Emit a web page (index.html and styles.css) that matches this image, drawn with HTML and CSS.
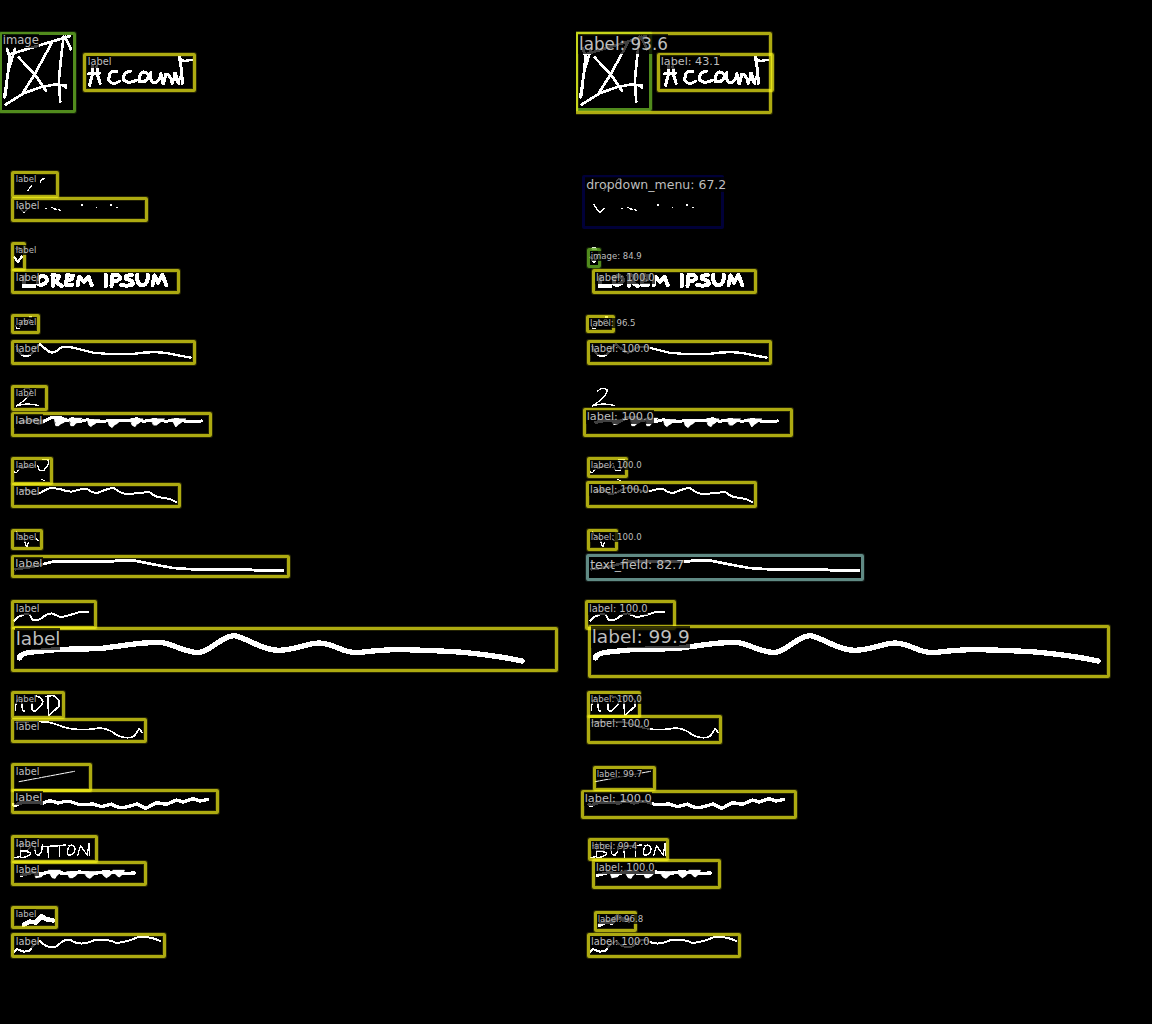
FILE: index.html
```html
<!DOCTYPE html>
<html lang="en">
<head>
<meta charset="utf-8">
<title>Sketch element detection</title>
<link rel="stylesheet" href="styles.css">
</head>
<body>
<main class="panels">
<section class="panel">
<svg class="ink" viewBox="0 0 576 1024">
<g id="sketch">
<g transform="translate(.2 20) scale(.33333)">
<path stroke-width="8" d="M32 102L210 48M195 50L212 88M190 50L182 120L176 180L180 245M45 85L25 150L12 232M20 85L28 110L16 225M55 112L105 165L137 212M155 68L105 160L66 222M16 254L70 220L120 202L165 193L198 197L196 203"/>
<path stroke-width="9" d="M276 138L276 165L268 196M290 138L292 165L300 190M264 162L298 160M350 154Q325 150 326 180Q335 198 358 184M391 154Q368 155 370 180Q385 194 410 180M430 155Q412 165 418 185Q438 190 445 168Q440 152 430 158M452 158Q448 190 465 188Q482 180 482 160L488 190M490 190L497 162Q512 165 516 190L526 160L536 190M538 112Q545 150 547 190M522 160L532 186L545 165"/>
<path stroke-width="7" d="M536 112L550 123L574 120"/>
</g>
<g transform="translate(-.2 160) scale(.33333)">
<path stroke-width="4" d="M122 66L126 58L133 56M84 92L90 84L95 78M54 133L64 148L72 158L86 145M138 145h1M156 142h3M162 146l8 2M176 149l7 2M246 135h1M290 142h1M333 135h1M351 142h1"/>
<path stroke-width="7" d="M44 292L54 306L66 290M50 266L60 266"/>
<path stroke-width="12" d="M74 350L72 378L104 378M125 347Q110 355 116 373Q135 378 142 360Q140 347 125 347M160 378L158 345L178 348L172 362L162 362L186 378M202 345L198 375L218 374M200 360L216 358M202 346L220 347M234 376L238 350L252 366L266 350L276 376M318 345L318 378M335 378L338 345Q362 342 360 356Q350 366 338 364M396 345Q375 345 378 356Q402 362 398 374Q380 380 364 374M412 344Q410 378 430 376Q446 370 444 344M458 376L464 346L474 368L488 345L500 376"/>
</g>
<g transform="translate(-.2 305) scale(.33333)">
<path stroke-width="4" d="M48 62L52 70L58 70M88 36L96 36M60 65Q70 35 80 55Q90 30 100 60M66 258Q80 243 94 255Q96 272 50 303Q77 292 115 301"/>
<path stroke-width="7" d="M50 125Q60 155 82 153Q100 148 108 128L120 118L145 138Q160 150 180 130Q190 121 220 128L280 143Q340 150 400 147Q450 138 500 144L572 158"/>
<path stroke-width="9" d="M60 352L80 348L100 345L130 350L155 338L180 336L200 348L218 341L240 350L262 344L290 350L335 347L390 346L410 341L430 349L465 344L500 349L530 344L560 349L606 348"/>
<path class="blob" d="M108 345h30l-8 10l-16 4l-4-6zM165 340h36l-8 12l-10 4l-6 6h-8zM210 340h36l-10 12l-8 2l-6 8h-8zM264 344h36l-14 12l-8 4l-4 5l-6-4zM325 344h40l-14 12l-8 4l-6 8l-8-6zM392 342h38l-12 12l-8 4l-4 7l-8-4zM454 342h40l-16 12l-8 6h-8zM516 342h42l-16 12l-6 4l-8 8l-4-8z"/>
</g>
<g transform="translate(-.2 450) scale(.33333)">
<path stroke-width="4" d="M44 66L50 68L58 58M130 28L145 30L146 42L132 62L118 60L114 48M126 88h3M130 92h3M60 50Q70 60 80 48Q95 60 108 45M76 278L78 286L82 289L86 278M110 267L115 271M50 245Q58 262 66 260L76 275"/>
<path stroke-width="6" d="M60 125L80 118L100 132L120 130Q140 116 155 114L180 117Q200 125 215 125Q245 116 262 117Q280 130 292 129Q325 115 342 114Q365 132 385 133Q435 126 450 127Q465 140 480 142L510 147L528 156"/>
<path stroke-width="8" d="M46 358L100 350L160 335L340 334L352 331L400 331L460 343L520 354L580 358L750 358L765 361L850 361"/>
</g>
<g transform="translate(-.6 590) scale(.33333)">
<path stroke-width="6" d="M44 92L58 80L78 72L92 74Q98 90 104 91Q120 92 135 78Q150 68 160 71L184 82L215 74L240 66L266 66"/>
<path stroke-width="16" d="M60 204Q62 188 110 185L180 178L300 176L390 164Q440 156 490 158C540 170 560 188 600 188C640 178 670 137 705 137C745 145 790 182 840 181C890 179 920 160 960 159C1010 162 1030 190 1075 188Q1150 178 1215 179Q1300 181 1380 186Q1490 196 1568 213"/>
<path stroke-width="5" d="M48 360Q46 340 60 322M66 335L70 360L76 364M98 340Q94 364 106 364Q128 348 130 335Q128 322 110 318M146 318L146 345L148 374M138 320L160 316Q186 328 178 350L148 376M50 397L110 394L150 397Q170 402 195 412Q240 425 300 414Q330 416 350 434Q385 450 405 438L420 416L428 428"/>
</g>
<g transform="translate(-.2 755) scale(.33333)">
<path stroke-width="3" stroke-dasharray="11 3" d="M58 80L224 49"/>
<path stroke-width="10" d="M40 149L46 152L60 144L90 142L130 144Q145 136 155 138L175 144Q195 138 212 140L240 149L280 147L305 155L335 147Q350 158 372 158L412 147L438 160L470 143L500 148L530 135L550 141L580 131L600 138L624 133"/>
<path stroke-width="4" d="M62 262L62 305L44 308M50 272Q90 262 92 275Q88 288 64 288Q96 290 92 298Q80 308 62 308M106 275Q104 305 118 300Q128 290 128 270M124 276L165 272M144 275L146 306M160 274L196 270M180 275L178 304M210 272Q198 290 206 300Q222 302 226 282Q222 266 208 272M234 300L242 272L262 300L268 266L270 300"/>
<path stroke-width="10" d="M64 361L100 352L120 357L155 350L200 356L240 351L280 356L310 351L350 352L370 356L404 354"/>
<path class="blob" d="M105 355h30l-10 10l-16 3zM146 346h36l-6 12l-6 4l-4 8l-8-2zM202 350h36l-10 12l-10 6h-8zM252 350h40l-14 14l-8 6l-8-4zM304 350h36l-10 12l-10 6l-6-4zM340 346h34l-8 14l-8 6l-6-4z"/>
<path stroke-width="14" d="M72 509L90 500L108 502L125 484L140 493L160 496"/>
<path stroke-width="6" d="M44 590L50 582L72 590L88 588L104 568L120 558Q155 592 180 566Q200 545 225 562Q250 572 285 555Q320 550 350 564Q385 560 410 548Q440 540 482 558"/>
</g>
</g>
</svg>
<div class="box image" style="--x:-1;--y:32;--w:77;--h:81"><span style="--s:11.6;--a:3;--b:12.5">image</span></div>
<div class="box" style="--x:83;--y:53;--w:113;--h:39"><span style="--s:9.8;--a:4;--b:12.5">label</span></div>
<div class="box" style="--x:11;--y:171;--w:48;--h:27"><span style="--s:8.5;--a:4;--b:11">label</span></div>
<div class="box" style="--x:11;--y:197;--w:137;--h:25"><span style="--s:9.8;--a:4;--b:12">label</span></div>
<div class="box" style="--x:11;--y:242;--w:15;--h:29"><span style="--s:8.5;--a:4;--b:11">label</span></div>
<div class="box" style="--x:11;--y:269;--w:169;--h:25"><span style="--s:9.8;--a:4;--b:12">label</span></div>
<div class="box" style="--x:11;--y:314;--w:29;--h:20"><span style="--s:8.5;--a:4;--b:11">label</span></div>
<div class="box" style="--x:11;--y:340;--w:185;--h:25"><span style="--s:9.8;--a:4;--b:12">label</span></div>
<div class="box" style="--x:11;--y:385;--w:37;--h:26"><span style="--s:8.5;--a:4;--b:11">label</span></div>
<div class="box" style="--x:11;--y:412;--w:201;--h:25"><span style="--s:11.3;--a:3.5;--b:12.5">label</span></div>
<div class="box" style="--x:11;--y:457;--w:42;--h:28"><span style="--s:8.5;--a:4;--b:11">label</span></div>
<div class="box" style="--x:11;--y:483;--w:170;--h:25"><span style="--s:9.8;--a:4;--b:12">label</span></div>
<div class="box" style="--x:11;--y:529;--w:32;--h:21"><span style="--s:8.5;--a:4;--b:11">label</span></div>
<div class="box" style="--x:11;--y:555;--w:279;--h:23"><span style="--s:11.3;--a:3.5;--b:12.5">label</span></div>
<div class="box" style="--x:11;--y:600;--w:86;--h:29"><span style="--s:9.8;--a:4;--b:12">label</span></div>
<div class="box" style="--x:11;--y:627;--w:547;--h:45"><span style="--s:18.5;--a:4;--b:18">label</span></div>
<div class="box" style="--x:11;--y:691;--w:54;--h:28"><span style="--s:8.5;--a:4;--b:11">label</span></div>
<div class="box" style="--x:11;--y:718;--w:136;--h:25"><span style="--s:9.8;--a:4;--b:12">label</span></div>
<div class="box" style="--x:11;--y:763;--w:81;--h:29"><span style="--s:9.8;--a:4;--b:12">label</span></div>
<div class="box" style="--x:11;--y:789;--w:208;--h:25"><span style="--s:11.3;--a:3.5;--b:12.5">label</span></div>
<div class="box" style="--x:11;--y:835;--w:87;--h:28"><span style="--s:9.8;--a:4;--b:12">label</span></div>
<div class="box" style="--x:11;--y:861;--w:136;--h:25"><span style="--s:9.8;--a:4;--b:12">label</span></div>
<div class="box" style="--x:11;--y:906;--w:47;--h:23"><span style="--s:8.5;--a:4;--b:11">label</span></div>
<div class="box" style="--x:11;--y:933;--w:155;--h:25"><span style="--s:9.8;--a:4;--b:12">label</span></div>
</section>
<section class="panel">
<svg class="ink" viewBox="0 0 576 1024"><use href="#sketch"/></svg>
<div class="box image" style="--x:-1;--y:32;--w:77;--h:79"></div>
<div class="box" style="--x:-1;--y:32;--w:197;--h:82"><span style="--s:16.8;--a:3.3;--b:18">label: 93.6</span></div>
<div class="box" style="--x:81;--y:53;--w:117;--h:39"><span style="--s:11.2;--a:3;--b:12.5">label: 43.1</span></div>
<div class="box dropdown" style="--x:6;--y:175;--w:142;--h:54"><span style="--s:12.5;--a:3.5;--b:14">dropdown_menu: 67.2</span></div>
<div class="box image" style="--x:11;--y:248;--w:14;--h:20"><span style="--s:8.5;--a:3;--b:11">image: 84.9</span></div>
<div class="box" style="--x:16;--y:269;--w:165;--h:25"><span style="--s:9.9;--a:3.3;--b:12">label: 100.0</span></div>
<div class="box" style="--x:10;--y:315;--w:29;--h:18"><span style="--s:8.6;--a:3.3;--b:11">label: 96.5</span></div>
<div class="box" style="--x:11;--y:340;--w:185;--h:25"><span style="--s:9.9;--a:3.3;--b:12">label: 100.0</span></div>
<div class="box" style="--x:7;--y:408;--w:210;--h:29"><span style="--s:11.3;--a:3;--b:12.5">label: 100.0</span></div>
<div class="box" style="--x:11;--y:457;--w:41;--h:21"><span style="--s:8.6;--a:3;--b:11">label: 100.0</span></div>
<div class="box" style="--x:10;--y:481;--w:171;--h:27"><span style="--s:9.9;--a:3.3;--b:12">label: 100.0</span></div>
<div class="box" style="--x:11;--y:529;--w:31;--h:22"><span style="--s:8.6;--a:3;--b:11">label: 100.0</span></div>
<div class="box field" style="--x:10;--y:554;--w:278;--h:27"><span style="--s:12.5;--a:3.5;--b:15">text_field: 82.7</span></div>
<div class="box" style="--x:9;--y:600;--w:91;--h:30"><span style="--s:9.9;--a:3.3;--b:12">label: 100.0</span></div>
<div class="box" style="--x:12;--y:625;--w:522;--h:53"><span style="--s:18.5;--a:3;--b:18.5">label: 99.9</span></div>
<div class="box" style="--x:11;--y:691;--w:54;--h:27"><span style="--s:8.6;--a:3;--b:11">label: 100.0</span></div>
<div class="box" style="--x:11;--y:715;--w:135;--h:29"><span style="--s:9.9;--a:3.3;--b:12">label: 100.0</span></div>
<div class="box" style="--x:17;--y:766;--w:63;--h:25"><span style="--s:8.6;--a:3;--b:11">label: 99.7</span></div>
<div class="box" style="--x:5;--y:790;--w:216;--h:29"><span style="--s:11.3;--a:3;--b:12.5">label: 100.0</span></div>
<div class="box" style="--x:12;--y:838;--w:81;--h:23"><span style="--s:8.6;--a:3;--b:11">label: 99.4</span></div>
<div class="box" style="--x:16;--y:859;--w:129;--h:30"><span style="--s:9.9;--a:3.3;--b:12">label: 100.0</span></div>
<div class="box" style="--x:18;--y:911;--w:43;--h:21"><span style="--s:8.6;--a:3;--b:11">label: 96.8</span></div>
<div class="box" style="--x:11;--y:933;--w:154;--h:25"><span style="--s:9.9;--a:3.3;--b:12">label: 100.0</span></div>
</section>
</main>
</body>
</html>
```
FILE: styles.css
```css
body {
  margin: 0;
  background: #000;
  font-family: "DejaVu Sans", sans-serif;
}

.panels {
  display: flex;
  height: 1024px;
}

.panel {
  position: relative;
  flex: 1;
  overflow: hidden;
}

.ink {
  display: block;
  width: 576px;
  height: 1024px;
  fill: none;
  stroke: #fff;
  stroke-linecap: round;
  stroke-linejoin: round;
  shape-rendering: crispEdges;
}

.blob {
  fill: #fff;
  stroke-width: 3;
}

/* Detection frames: --x/--y/--w/--h are panel pixels */
.box {
  position: absolute;
  box-sizing: border-box;
  left: calc(var(--x) * 1px);
  top: calc(var(--y) * 1px);
  width: calc(var(--w) * 1px);
  height: calc(var(--h) * 1px);
  border: 3px solid rgba(250, 246, 24, .69);
  border-radius: 2px;
  box-shadow: 0 0 0 1px rgba(253, 250, 20, .16), inset 0 0 0 1px rgba(253, 250, 20, .14);
}

.box.image {
  border-color: rgba(96, 166, 34, .84);
  box-shadow: 0 0 0 1px rgba(96, 166, 34, .2);
}

.box.dropdown {
  border-color: #000038;
  box-shadow: none;
}

.box.field {
  border-color: #608a84;
  box-shadow: 0 0 0 1px rgba(96, 138, 132, .2);
}

/* --s font size, --a text start and --b baseline from the frame's corner */
.box span {
  position: absolute;
  left: calc(var(--a) * 1px - 3.3px);
  top: calc(var(--b) * 1px - 2.8px - var(--s) * .946px);
  padding-left: 1px;
  font-size: calc(var(--s) * 1px);
  line-height: 1.2;
  white-space: nowrap;
  color: #bebebe;
  background: rgba(0, 0, 0, .75);
}
```
